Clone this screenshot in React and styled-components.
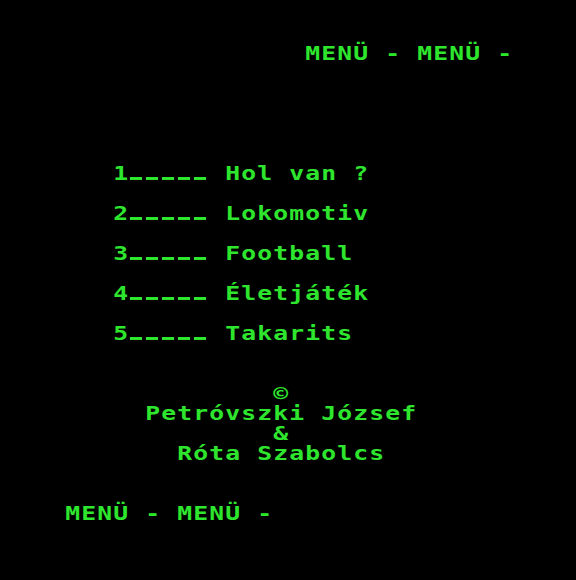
import React from 'react';
import styled, { createGlobalStyle } from 'styled-components';

const GREEN = '#2ee62e';
const COLS = 36;
const ROWS = 29;

const GlobalStyle = createGlobalStyle`
  html, body {
    margin: 0;
    padding: 0;
    background: #000;
    overflow: hidden;
  }
`;

const Screen = styled.div`
  width: 576px;
  height: 580px;
  background: #000;
  padding: 3px 0 0 1px;
  box-sizing: border-box;
  overflow: hidden;
  color: ${GREEN};
  font-family: 'DejaVu Sans Mono', 'Liberation Mono', monospace;
  font-size: 19px;
  font-weight: bold;
`;

const Line = styled.div`
  display: flex;
  height: 20px;
  line-height: 20px;
`;

const Cell = styled.span`
  display: inline-flex;
  justify-content: center;
  width: 16px;
  height: 20px;
  flex: none;
  white-space: pre;
`;

const Glyph = styled.span`
  display: inline-block;
  transform: scaleX(1.3);
  transform-origin: center;
  margin-left: -1px;
`;

const Dash = styled.span`
  display: inline-block;
  width: 12px;
  height: 3px;
  margin: 14px 2px 0 0;
  background: ${GREEN};
`;

// text placed on the 36x29 character grid: [row, col, text]
const placed = [
  [2, 19, 'MENÜ - MENÜ -'],
  [8, 7, '1_____ Hol van ?'],
  [10, 7, '2_____ Lokomotiv'],
  [12, 7, '3_____ Football'],
  [14, 7, '4_____ Életjáték'],
  [16, 7, '5_____ Takarits'],
  [19, 17, '©'],
  [20, 9, 'Petróvszki József'],
  [21, 17, '&'],
  [22, 11, 'Róta Szabolcs'],
  [25, 4, 'MENÜ - MENÜ -']
];

const buildLines = () => {
  const lines = Array.from({ length: ROWS }, () => ' '.repeat(COLS));
  placed.forEach(([row, col, text]) => {
    const line = lines[row];
    lines[row] = line.slice(0, col) + text + line.slice(col + text.length);
  });
  return lines;
};

const renderChar = (ch) => {
  if (ch === ' ') return ' ';
  if (ch === '_') return <Dash />;
  return <Glyph>{ch}</Glyph>;
};

const App = () => {
  const lines = buildLines();
  return (
    <>
      <GlobalStyle />
      <Screen>
        {lines.map((line, r) => (
          <Line key={r}>
            {Array.from(line).map((ch, c) => (
              <Cell key={c}>{renderChar(ch)}</Cell>
            ))}
          </Line>
        ))}
      </Screen>
    </>
  );
};

export default App;
